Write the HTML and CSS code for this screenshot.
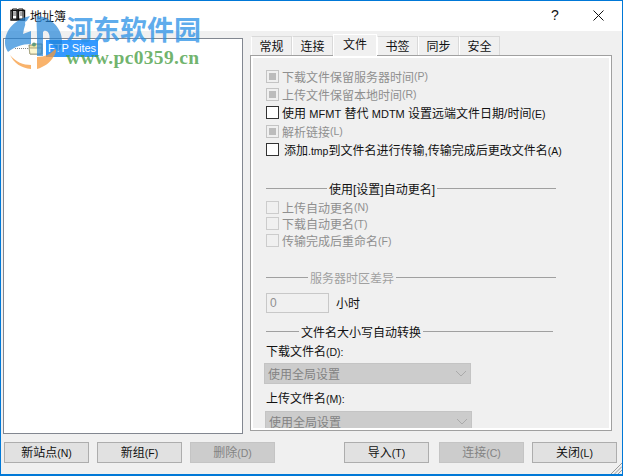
FILE: index.html
```html
<!DOCTYPE html>
<html lang="zh">
<head>
<meta charset="utf-8">
<title>地址簿</title>
<link rel="stylesheet" href="styles.css">
</head>
<body>
<div class="window">
  <header class="titlebar">
    <svg class="app-icon" width="16" height="14" viewBox="0 0 16 14"><path d="M1 2.5h6v9.5H1zM8.500 2.500h6V12h-6z" fill="#fff" stroke="#111" stroke-width="1.400"/><path d="M2.500 1h4.500l.8 1.500L8.500 1H13v10H2.500z" fill="none" stroke="#111"/><path d="M3 5h3M3 7h3M10 5h3M10 7h3" stroke="#555"/></svg>
    <span class="title-text">地址簿</span>
    <span class="help">?</span>
    <svg class="close" width="11" height="11" viewBox="0 0 11 11"><path d="M.5.5l10 10M10.500.5l-10 10" stroke="#111" fill="none"/></svg>
  </header>
  <main class="main">
    <section class="tree">
      <div class="tree-row">
        <span class="conn"></span>
        <svg class="folder" width="16" height="14" viewBox="0 0 16 14"><path d="M1 3h5l1-1h7v10H2z" fill="#efe6a8" stroke="#8c8c70"/><path d="M1 6h13l-1 6H2z" fill="#fbf6cf" stroke="#a8a684"/><circle cx="6" cy="2.500" r="2" fill="#5f9c7e"/></svg>
        <span class="tree-label">FTP Sites</span>
      </div>
    </section>
    <section class="tabs">
      <nav class="tabbar">
        <span class="tab">常规</span>
        <span class="tab">连接</span>
        <span class="tab active">文件</span>
        <span class="tab">书签</span>
        <span class="tab">同步</span>
        <span class="tab">安全</span>
      </nav>
      <div class="panel">
        <label class="row off"><span class="box mixed"></span>下载文件保留服务器时间<span class="lt">(P)</span></label>
        <label class="row off"><span class="box mixed"></span>上传文件保留本地时间<span class="lt">(R)</span></label>
        <label class="row"><span class="box"></span><span class="pre">使用 <span class="mf">MFMT</span> 替代 <span class="mf">MDTM</span> 设置远端文件日期/时间<span class="lt">(E)</span></span></label>
        <label class="row off gap1"><span class="box mixed"></span>解析链接<span class="lt">(L)</span></label>
        <label class="row"><span class="box"></span><span class="ind">添加<span class="lt">.tmp</span>到文件名进行传输,传输完成后更改文件名<span class="lt">(A)</span></span></label>

        <div class="group g1"><span class="line s1"></span><span class="gt">使用[设置]自动更名]</span><span class="line"></span></div>
        <label class="row tight first off"><span class="box blank"></span>上传自动更名<span class="lt">(N)</span></label>
        <label class="row tight off"><span class="box blank"></span>下载自动更名<span class="lt">(T)</span></label>
        <label class="row tight off"><span class="box blank"></span>传输完成后重命名<span class="lt">(F)</span></label>

        <div class="group g2 dim"><span class="line s2"></span><span class="gt">服务器时区差异</span><span class="line"></span></div>
        <div class="tz"><span class="num">0</span><span>小时</span></div>

        <div class="group g3"><span class="line s3"></span><span class="gt">文件名大小写自动转换</span><span class="line"></span></div>
        <div class="lab">下载文件名<span class="lt">(D):</span></div>
        <div class="select"><span>使用全局设置</span><svg width="12" height="7" viewBox="0 0 12 7"><path d="M1 1l5 5 5-5" fill="none" stroke="#aaa"/></svg></div>
        <div class="lab lab2">上传文件名<span class="lt">(M):</span></div>
        <div class="select sel2"><span>使用全局设置</span><svg width="12" height="7" viewBox="0 0 12 7"><path d="M1 1l5 5 5-5" fill="none" stroke="#aaa"/></svg></div>
      </div>
    </section>
  </main>
  <footer class="buttons">
    <div class="btn-group">
      <button class="btn">新站点<span class="lt">(N)</span></button>
      <button class="btn">新组<span class="lt">(F)</span></button>
      <button class="btn disabled">删除<span class="lt">(D)</span></button>
    </div>
    <div class="btn-group right">
      <button class="btn">导入<span class="lt">(T)</span></button>
      <button class="btn disabled">连接<span class="lt">(C)</span></button>
      <button class="btn close-btn">关闭<span class="lt">(L)</span></button>
    </div>
  </footer>
  <svg class="grip" width="12" height="12" viewBox="0 0 12 12"><path d="M12 1L1 12M12 4.500L4.500 12M12 8l-4 4" stroke="#999" fill="none"/></svg>
  <svg class="wm-logo" width="60" height="56" viewBox="0 0 60 56">
    <g fill="#1f82d8" opacity=".68">
      <path d="M26 2C11 5 1 16 1 29c0 3 1 6 3 9 6-5 14-8 23-8V17l-8 3c1-7 3-13 7-18z"/>
      <path d="M33 2c14 1 25 12 25 25 0 4-1 8-4 11-2-5-5-8-9-10 2-7-1-12-5-11l-1 1v24h-6V22c0-8-1-14 0-20z"/>
    </g>
    <g fill="#f79a3c" opacity=".75">
      <path d="M6 41c6 7 13 10 21 10v4C17 54 10 49 6 41z"/>
      <path d="M33 43c8 0 14-3 18-8 2 1 1 4-1 7-4 7-10 11-17 13z"/>
    </g>
    <circle cx="23" cy="9" r="2" fill="#fff"/>
  </svg>
  <div class="wm-cn">河东软件园</div>
  <div class="wm-url">www.pc0359.cn</div>
</div>
</body>
</html>
```
FILE: styles.css
```css
* { box-sizing: border-box; }
html, body { margin: 0; padding: 0; }
body {
  width: 623px;
  height: 476px;
  overflow: hidden;
  font-family: "Liberation Sans", "Noto Sans CJK SC", sans-serif;
  font-size: 12px;
  color: #111;
}
.lt { font-size: 10.500px; }
.mf { font-size: 11px; }
.pre { white-space: pre; }
.window {
  position: relative;
  width: 623px;
  height: 476px;
  display: flex;
  flex-direction: column;
  background: #f0f0f0;
  border: 1px solid #0078d7;
  border-bottom-width: 2px;
  overflow: hidden;
}
.titlebar {
  height: 30px;
  flex: none;
  background: #fff;
  display: flex;
  align-items: center;
  padding: 0 0 2px 9px;
}
.app-icon { flex: none; margin-right: 4px; }
.title-text { font-size: 12px; flex: 1; }
.help { font-size: 14px; width: 12px; margin-right: 30px; }
.close { margin-right: 18px; }
.main {
  flex: none;
  height: 396px;
  margin-top: 7px;
  display: flex;
}
.tree {
  width: 240px;
  height: 396px;
  margin-left: 2px;
  background: #fff;
  border: 1px solid #828790;
}
.tree-row {
  display: flex;
  align-items: center;
  height: 17px;
  margin-top: 1px;
  padding-left: 11px;
}
.conn { flex: none; width: 13px; border-top: 1px dotted #888; }
.folder { flex: none; margin-right: 2px; }
.tree-label {
  background: #3399ff;
  color: #fff;
  font-size: 11px;
  line-height: 17px;
  padding: 0 2px;
  white-space: nowrap;
}
.tabs {
  width: 363px;
  margin-left: 7px;
  display: flex;
  flex-direction: column;
}
.tabbar {
  display: flex;
  height: 19px;
  flex: none;
  padding-left: 1px;
  margin-top: -2px;
  align-items: flex-end;
}
.tab {
  height: 19px;
  width: 41px;
  background: #f0f0f0;
  border: 1px solid #d9d9d9;
  border-bottom: none;
  border-left-color: #fff;
  text-align: center;
  font-size: 12px;
  line-height: 21px;
  overflow: hidden;
}
.tab.active {
  width: 44px;
  height: 22px;
  border-color: #fff;
  position: relative;
  z-index: 1;
  margin-bottom: -1px;
  line-height: 20px;
}
.panel {
  width: 362px;
  height: 376px;
  border: 3px solid #fff;
  outline: 1px solid #a0a0a0;
  outline-offset: -1px;
  background: #f0f0f0;
  padding: 9px 0 0 13px;
  overflow: hidden;
  flex: none;
}
.row {
  display: flex;
  align-items: center;
  height: 18px;
  font-size: 12px;
  white-space: nowrap;
}
.row.tight { height: 17px; }
.row.first { height: 16px; margin-top: 2px; }
.gap1 { margin-top: 1px; }
.off { color: #8f8f8f; }
.box {
  flex: none;
  width: 13px;
  height: 13px;
  margin: 0 3px 0 0;
  background: #fff;
  border: 1px solid #333;
}
.box.mixed {
  border-color: #c4c4c4;
  background: #bcbcbc;
  box-shadow: inset 0 0 0 2px #f0f0f0;
}
.box.blank { border-color: #cccccc; background: #f0f0f0; }
.ind { padding-left: 2px; }
.group {
  display: flex;
  align-items: center;
  width: 290px;
  height: 18px;
  font-size: 12px;
  white-space: nowrap;
}
.g1 { margin-top: 21px; }
.g2 { margin-top: 19px; }
.g3 { margin-top: 9px; width: 287px; }
.dim { color: #a0a0a0; }
.line { flex: 1; height: 1px; background: #a0a0a0; }
.s1 { flex: none; width: 61px; }
.s2 { flex: none; width: 42px; }
.s3 { flex: none; width: 33px; }
.gt { padding: 0 2px; }
.tz {
  display: flex;
  align-items: center;
  height: 21px;
  margin-top: 6px;
}
.num {
  width: 63px;
  height: 20px;
  border: 1px solid #c8c8c8;
  padding-left: 3px;
  color: #8f8f8f;
  font-size: 12px;
  line-height: 18px;
  margin-right: 7px;
}
.lab { margin-top: 3px; height: 18px; font-size: 12px; line-height: 18px; }
.lab2 { margin-top: 6px; }
.select {
  width: 207px;
  height: 21px;
  margin-left: -2px;
  margin-top: 2px;
  background: #cccccc;
  border: 1px solid #c4c4c4;
  color: #838383;
  display: flex;
  align-items: center;
  justify-content: space-between;
  padding: 0 3px 0 3px;
  font-size: 12px;
}
.sel2 { margin-left: -1px; margin-top: 3px; }
.buttons {
  flex: none;
  height: 21px;
  margin-top: 8px;
  display: flex;
  justify-content: space-between;
  padding: 0 5px 0 3px;
}
.btn-group { display: flex; gap: 8px; }
.btn-group.right { gap: 10px; }
.btn {
  width: 85px;
  height: 21px;
  background: #e1e1e1;
  border: 1px solid #adadad;
  color: #111;
  font-family: "Liberation Sans", "Noto Sans CJK SC", sans-serif;
  font-size: 12px;
  line-height: 17px;
  padding: 1px 0 0;
}
.close-btn { margin-left: -2px; }
.btn.disabled { background: #cccccc; border-color: #c4c4c4; color: #838383; }
.grip { position: absolute; right: 0; bottom: 0; }
.wm-logo { position: absolute; left: 3px; top: 13px; }
.wm-cn {
  position: absolute;
  left: 65px;
  top: 10px;
  font-family: "Noto Sans CJK SC", sans-serif;
  font-weight: 700;
  font-size: 27px;
  line-height: 36px;
  color: rgba(42, 145, 230, .75);
  white-space: nowrap;
}
.wm-url {
  position: absolute;
  left: 65px;
  top: 47px;
  font-family: "Liberation Serif", serif;
  font-weight: 700;
  font-size: 19.500px;
  line-height: 20px;
  letter-spacing: .35px;
  color: rgba(75, 160, 70, .8);
  white-space: nowrap;
}
```
